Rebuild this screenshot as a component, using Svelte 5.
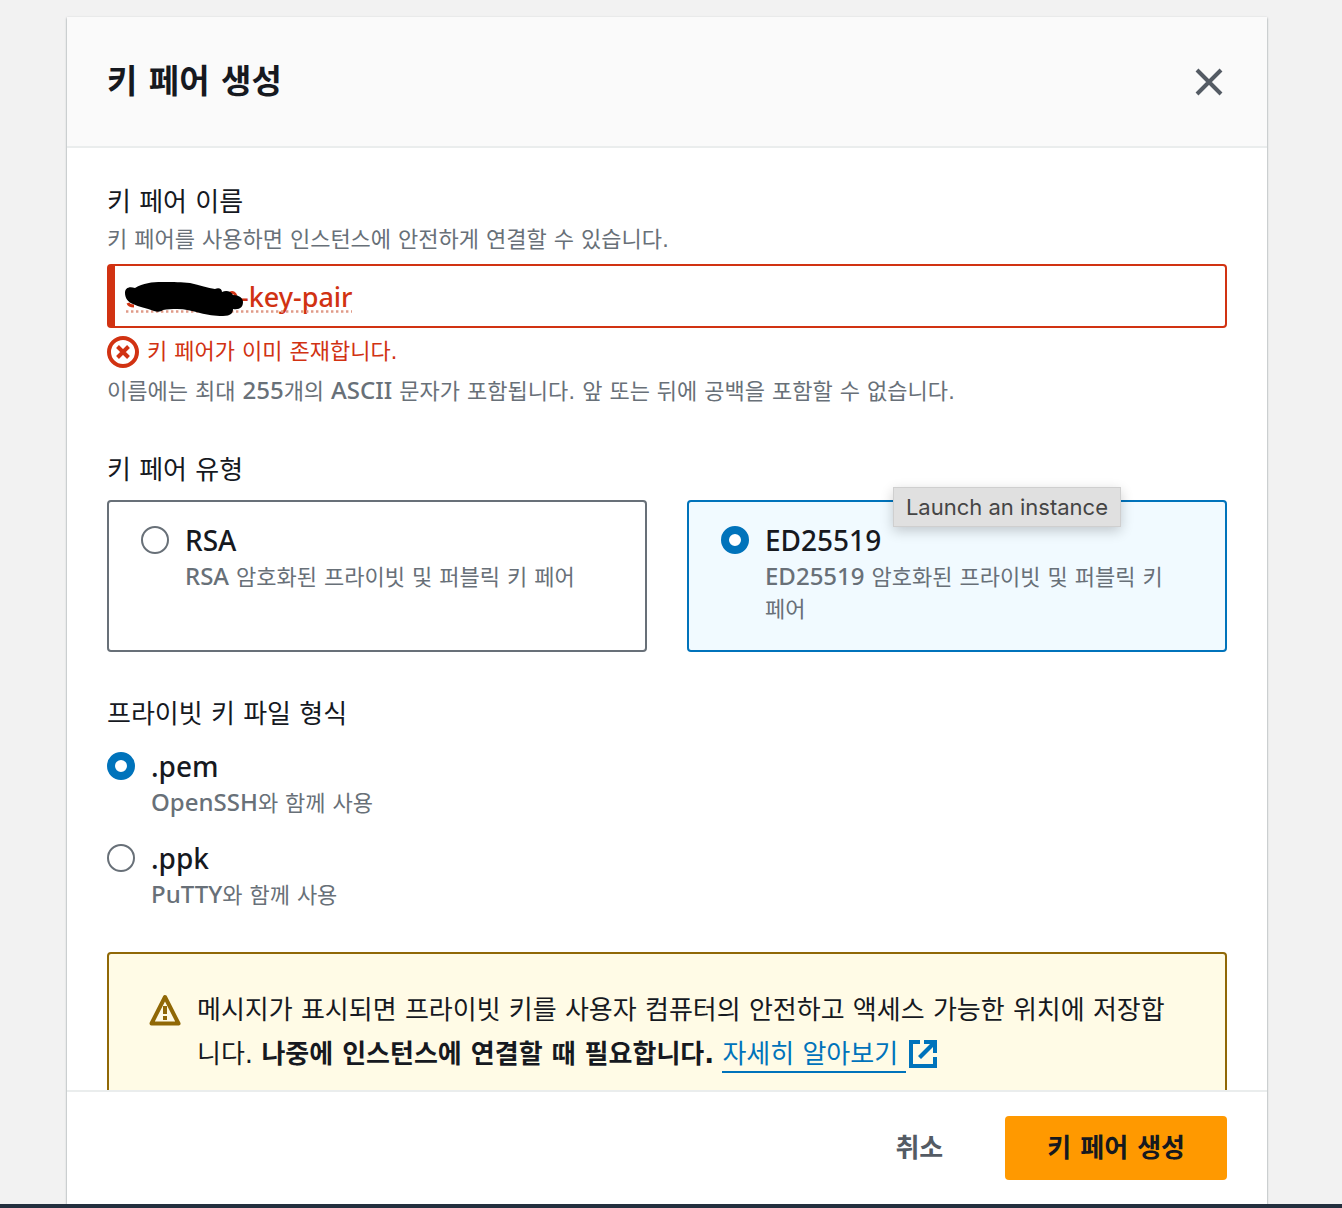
<script lang="ts">
  type Option = { value: string; title: string; latin: string; description: string };

  const keyTypes: Option[] = [
    { value: "rsa", title: "RSA", latin: "RSA", description: " 암호화된 프라이빗 및 퍼블릭 키 페어" },
    { value: "ed25519", title: "ED25519", latin: "ED25519", description: " 암호화된 프라이빗 및 퍼블릭 키 페어" },
  ];
  const fileFormats: Option[] = [
    { value: "pem", title: ".pem", latin: "OpenSSH", description: "와 함께 사용" },
    { value: "ppk", title: ".ppk", latin: "PuTTY", description: "와 함께 사용" },
  ];

  let keyName = $state("-key-pair");
  let keyType = $state("ed25519");
  let fileFormat = $state("pem");
</script>

<svelte:head>
  <title>키 페어 생성</title>
</svelte:head>

<div class="page">
  <div class="modal" role="dialog" aria-labelledby="modal-title">
    <header class="modal-header">
      <h1 id="modal-title">키 페어 생성</h1>
      <button class="close" type="button" aria-label="닫기">
        <svg viewBox="0 0 28 28" width="28" height="28">
          <path d="M2 2l24 24M26 2L2 26" fill="none" stroke="#545b64" stroke-width="4" />
        </svg>
      </button>
    </header>

    <main class="modal-body">
      <section class="field">
        <label class="label" for="key-name">키 페어 이름</label>
        <p class="hint" id="key-hint">키 페어를 사용하면 인스턴스에 안전하게 연결할 수 있습니다.</p>
        <div class="input-wrap">
          <input id="key-name" type="text" bind:value={keyName} aria-invalid="true" aria-describedby="key-hint key-error" />
          <svg class="redaction" viewBox="0 0 228 40" width="228" height="40" aria-hidden="true">
            <path d="M2 33.500H228" fill="none" stroke="#e09a88" stroke-width="2.4" stroke-dasharray="2.4 2.6" />
            <path d="M4 25q1 3 6 3M106 15q4-2 6 3" fill="none" stroke="#d13212" stroke-width="3" />
            <path
              d="M1 15C1 10 5 8 11 10C19 5 28 4 38 4C50 4 58 4 66 5C76 7 84 10 91 11C95 9 98 11 98 14C102 12 107 13 109 17C115 17 119 20 119 24C119 29 116 32 109 31C109 35 107 38 99 38C90 38 84 37 76 35C68 33 61 31 53 31C48 31 43 31 39 32C37 34 33 34 30 33C22 30 15 29 9 26C4 24 1 20 1 15Z"
              fill="#000"
            />
          </svg>
        </div>
        <p class="error" id="key-error">
          <svg viewBox="0 0 32 32" width="32" height="32" aria-hidden="true">
            <circle cx="16" cy="16" r="14" fill="none" stroke="#d13212" stroke-width="4" />
            <path d="M10.500 10.500l11 11M21.500 10.500l-11 11" fill="none" stroke="#d13212" stroke-width="4" />
          </svg>
          <span>키 페어가 이미 존재합니다.</span>
        </p>
        <p class="hint constraint">
          이름에는 최대 <span class="latin">255</span>개의 <span class="latin">ASCII</span> 문자가 포함됩니다. 앞 또는 뒤에 공백을 포함할 수 없습니다.
        </p>
      </section>

      <fieldset class="field">
        <legend class="label">키 페어 유형</legend>
        <div class="tiles">
          {#each keyTypes as option}
            <label class="tile" class:tile--checked={keyType === option.value}>
              <input type="radio" name="key-type" value={option.value} bind:group={keyType} />
              <span class="option-text">
                <span class="option-title">{option.title}</span>
                <span class="hint"><span class="latin">{option.latin}</span>{option.description}</span>
              </span>
            </label>
          {/each}
          <span class="tooltip" role="tooltip">Launch an instance</span>
        </div>
      </fieldset>

      <fieldset class="field">
        <legend class="label">프라이빗 키 파일 형식</legend>
        <div class="radios">
          {#each fileFormats as option}
            <label class="radio">
              <input type="radio" name="file-format" value={option.value} bind:group={fileFormat} />
              <span class="option-text">
                <span class="option-title">{option.title}</span>
                <span class="hint"><span class="latin">{option.latin}</span>{option.description}</span>
              </span>
            </label>
          {/each}
        </div>
      </fieldset>

      <div class="alert">
        <svg viewBox="0 0 32 32" width="32" height="32" aria-hidden="true">
          <path d="M16 3L29.500 29.500H2.500Z" fill="none" stroke="#906806" stroke-width="4" stroke-linejoin="round" />
          <path d="M16 12v8M16 22v4" fill="none" stroke="#906806" stroke-width="4" />
        </svg>
        <p>
          메시지가 표시되면 프라이빗 키를 사용자 컴퓨터의 안전하고 액세스 가능한 위치에 저장합니다.
          <b>나중에 인스턴스에 연결할 때 필요합니다.</b>
          <a href="#learn-more"
            ><span class="link-text">자세히 알아보기&nbsp;</span><svg viewBox="0 0 28 28" width="28" height="28" aria-hidden="true">
              <path d="M11 2H2v24h24V17" fill="none" stroke="#0073bb" stroke-width="4" />
              <path d="M15 0H28V13H24V7L12 19L9 16L21 4H15Z" fill="#0073bb" />
            </svg></a
          >
        </p>
      </div>
    </main>

    <footer class="modal-footer">
      <button class="btn btn--link" type="button">취소</button>
      <button class="btn btn--primary" type="button">키 페어 생성</button>
    </footer>
  </div>
  <div class="console-bar"></div>
</div>

<style>
  :global(body) {
    margin: 0;
  }

  .page {
    --korean: "DejaVu Sans", "Noto Sans CJK KR", sans-serif;
    --latin: "Noto Sans", "Noto Sans CJK KR", sans-serif;
    box-sizing: border-box;
    height: 100vh;
    padding-top: 17px;
    display: flex;
    flex-direction: column;
    background: #f2f2f2;
    color: #16191f;
    font-family: var(--korean);
    font-size: 26px;
    line-height: 36px;
  }

  .modal {
    flex: 1;
    min-height: 0;
    margin: 0 75px 0 67px;
    display: flex;
    flex-direction: column;
    background: #fff;
    box-shadow: 0 1px 2px rgba(0, 28, 36, 0.5);
  }

  .modal-header {
    display: flex;
    align-items: center;
    justify-content: space-between;
    padding: 40px;
    background: #fafafa;
    border-bottom: 2px solid #eaeded;
  }
  h1 {
    margin: 0;
    font-size: 33px;
    line-height: 49px;
    font-weight: 700;
  }
  .close {
    padding: 4px;
    border: 0;
    background: none;
    line-height: 0;
    cursor: pointer;
  }

  .modal-body {
    flex: 1;
    min-height: 0;
    overflow: hidden;
    padding: 36px 40px 0;
  }
  .field {
    min-width: 0;
    margin: 0 0 44px;
    padding: 0;
    border: 0;
  }
  fieldset.field:last-of-type {
    margin-bottom: 40px;
  }
  .label {
    display: block;
    padding: 0;
  }
  .hint {
    display: block;
    margin: 4px 0 0;
    color: #687078;
    font-size: 22px;
    line-height: 32px;
    word-break: keep-all;
  }
  .latin {
    font-family: var(--latin);
    font-size: 24px;
    font-weight: 500;
    line-height: 24px;
  }

  .input-wrap {
    position: relative;
    margin-top: 8px;
  }
  .input-wrap input {
    box-sizing: border-box;
    width: 100%;
    height: 64px;
    padding: 0 20px 0 125px;
    display: block;
    border: 2px solid #d13212;
    border-left-width: 8px;
    border-radius: 4px;
    background: #fff;
    color: #d13212;
    font-family: var(--latin);
    font-size: 27px;
    font-weight: 500;
  }
  .redaction {
    position: absolute;
    top: 14px;
    left: 17px;
    pointer-events: none;
  }

  .error {
    display: flex;
    align-items: center;
    gap: 8px;
    margin: 8px 0 0;
    color: #d13212;
    font-size: 22px;
    line-height: 32px;
  }
  .constraint {
    margin-top: 8px;
  }

  input[type="radio"] {
    appearance: none;
    box-sizing: border-box;
    flex: none;
    width: 28px;
    height: 28px;
    margin: 4px 16px 0 0;
    border: 2px solid #687078;
    border-radius: 50%;
    background: #fff;
  }
  input[type="radio"]:checked {
    border: 8px solid #0073bb;
  }
  .option-text {
    min-width: 0;
  }
  .option-title {
    display: block;
    font-family: var(--latin);
    font-size: 28px;
    font-weight: 500;
  }

  .tiles {
    position: relative;
    display: grid;
    grid-template-columns: 1fr 1fr;
    gap: 40px;
    margin-top: 12px;
  }
  .tile {
    display: flex;
    align-items: flex-start;
    padding: 20px 32px 24px;
    border: 2px solid #687078;
    border-radius: 4px;
  }
  .tile--checked {
    border-color: #0073bb;
    background: #f1faff;
  }
  .tooltip {
    position: absolute;
    top: -13px;
    right: 106px;
    padding: 0 12px;
    border: 1px solid #cfcfcf;
    background: #e0e0e0;
    box-shadow: 0 4px 12px rgba(0, 0, 0, 0.2);
    color: #454545;
    font-family: Inter, sans-serif;
    font-size: 22px;
    line-height: 38px;
    white-space: nowrap;
  }

  .radios {
    display: grid;
    gap: 20px;
    margin-top: 16px;
  }
  .radio {
    display: flex;
    align-items: flex-start;
  }

  .alert {
    display: flex;
    align-items: flex-start;
    gap: 16px;
    padding: 34px 40px;
    border: 2px solid #906806;
    border-radius: 4px;
    background: #fffbe6;
  }
  .alert > svg {
    flex: none;
    margin-top: 6px;
  }
  .alert p {
    margin: 0;
    line-height: 44px;
  }
  .alert a {
    color: #0073bb;
    text-decoration: none;
    white-space: nowrap;
  }
  .link-text {
    padding-bottom: 2px;
    border-bottom: 2px solid #0073bb;
  }
  .alert a svg {
    margin-left: 3px;
    vertical-align: -5px;
  }

  .modal-footer {
    display: flex;
    justify-content: flex-end;
    gap: 20px;
    padding: 24px 40px;
    border-top: 2px solid #eaeded;
  }
  .btn {
    height: 64px;
    padding: 0 42px 6px;
    border: 0;
    border-radius: 4px;
    font-family: var(--korean);
    font-size: 26px;
    font-weight: 700;
    cursor: pointer;
  }
  .btn--link {
    background: none;
    color: #545b64;
  }
  .btn--primary {
    background: #ff9900;
    color: #16191f;
  }

  .console-bar {
    height: 4px;
    background: #232f3e;
  }
</style>
